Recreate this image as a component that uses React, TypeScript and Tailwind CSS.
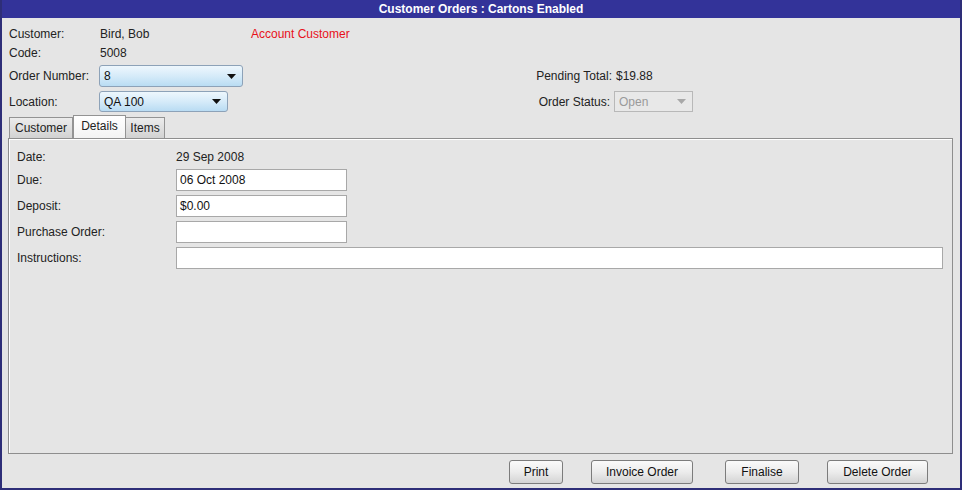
// Customer Orders window - Swing-style order screen with details tab selected
import React from "react";

const font = { fontFamily: '"Liberation Sans", Arial, sans-serif' };

// Small black down-arrow used inside the combo boxes
function Arrow({ color = "#111" }: { color?: string }) {
  return (
    <svg width="9" height="5" viewBox="0 0 9 5">
      <path d="M0 0 L9 0 L4.5 5 Z" fill={color} />
    </svg>
  );
}

// Light blue gradient combo box
function Combo({ value, width, height }: { value: string; width: string; height: string }) {
  return (
    <div
      className={`${width} ${height} flex items-center justify-between rounded-[3px] border border-[#8da2b8] bg-gradient-to-b from-[#eef7fd] via-[#d6ebf9] to-[#b9dcf3] pl-[4px] pr-[6px] text-[12px] text-[#111]`}
    >
      <span>{value}</span>
      <Arrow />
    </div>
  );
}

// White text field with grey border
function Field({ value = "", width }: { value?: string; width: string }) {
  return (
    <div
      className={`${width} h-[22px] flex items-center border border-[#a8a8a8] bg-white px-[3px] text-[12px] text-[#111]`}
    >
      {value}
    </div>
  );
}

function Button({ label, width }: { label: string; width: string }) {
  return (
    <div
      className={`${width} h-[24px] flex items-center justify-center rounded-[3px] border border-[#7c7c7c] bg-gradient-to-b from-[#fafafa] via-[#ececec] to-[#d4d4d4] text-[12px] text-[#111]`}
    >
      {label}
    </div>
  );
}

export default function App() {
  return (
    <div
      style={font}
      className="w-[962px] h-[490px] flex flex-col bg-[#e5e5e5] border-l-2 border-r-2 border-b-2 border-[#2e2e78] text-[12px] text-[#222]"
    >
      {/* Title bar */}
      <div className="h-[18px] shrink-0 bg-[#333399] flex items-center justify-center text-white font-bold text-[12px]">
        Customer Orders : Cartons Enabled
      </div>

      {/* Header fields */}
      <div className="pl-[7px] pt-[6px] flex flex-col">
        <div className="h-[19px] flex items-center">
          <span className="w-[91px]">Customer:</span>
          <span className="w-[151px]">Bird, Bob</span>
          <span className="text-[#e8101a]">Account Customer</span>
        </div>
        <div className="h-[19px] flex items-center">
          <span className="w-[91px]">Code:</span>
          <span>5008</span>
        </div>
        <div className="mt-[3px] h-[22px] flex items-center">
          <div className="w-[491px] flex items-center">
            <span className="w-[90px]">Order Number:</span>
            <Combo value="8" width="w-[144px]" height="h-[22px]" />
          </div>
          <span className="w-[112px] text-right">Pending Total:</span>
          <span className="ml-[4px]">$19.88</span>
        </div>
        <div className="mt-[4px] h-[21px] flex items-center">
          <div className="w-[491px] flex items-center">
            <span className="w-[90px]">Location:</span>
            <Combo value="QA 100" width="w-[129px]" height="h-[21px]" />
          </div>
          <span className="w-[110px] text-right">Order Status:</span>
          <div className="ml-[4px] w-[79px] h-[21px] flex items-center justify-between border border-[#b8b8b8] bg-[#e8e8e8] pl-[4px] pr-[6px] text-[#9a9a9a]">
            <span>Open</span>
            <Arrow color="#a8a8a8" />
          </div>
        </div>
      </div>

      {/* Tabs + panel */}
      <div className="mt-[3px] pl-[6px] pr-[7px] flex flex-col">
        <div className="h-[23px] flex items-end pl-[1px]">
          <div className="h-[21px] w-[64px] flex items-center justify-center border border-b-0 border-[#939393] bg-gradient-to-b from-[#ececec] to-[#d2d2d2]">
            Customer
          </div>
          <div className="h-[23px] w-[53px] flex items-center justify-center border border-b-0 border-[#939393] bg-gradient-to-b from-white to-[#f3f3f3] pb-[2px]">
            Details
          </div>
          <div className="h-[21px] w-[39px] flex items-center justify-center border border-b-0 border-l-0 border-[#939393] bg-gradient-to-b from-[#ececec] to-[#d2d2d2]">
            Items
          </div>
        </div>
        <div className="h-[316px] border border-[#8e8e8e] bg-[#e5e5e5] shadow-[inset_1px_1px_0_#ffffff] pl-[8px] pr-[9px] pt-[10px] flex flex-col gap-[4px]">
          <div className="h-[16px] flex items-center">
            <span className="w-[159px]">Date:</span>
            <span>29 Sep 2008</span>
          </div>
          <div className="flex items-center">
            <span className="w-[159px]">Due:</span>
            <Field value="06 Oct 2008" width="w-[171px]" />
          </div>
          <div className="flex items-center">
            <span className="w-[159px]">Deposit:</span>
            <Field value="$0.00" width="w-[171px]" />
          </div>
          <div className="flex items-center">
            <span className="w-[159px]">Purchase Order:</span>
            <Field width="w-[171px]" />
          </div>
          <div className="flex items-center">
            <span className="w-[159px] shrink-0">Instructions:</span>
            <Field width="flex-1" />
          </div>
        </div>
      </div>

      {/* Action buttons */}
      <div className="mt-[6px] flex items-center justify-end pr-[32px]">
        <Button label="Print" width="w-[54px]" />
        <div className="ml-[28px]">
          <Button label="Invoice Order" width="w-[102px]" />
        </div>
        <div className="ml-[32px]">
          <Button label="Finalise" width="w-[74px]" />
        </div>
        <div className="ml-[28px]">
          <Button label="Delete Order" width="w-[101px]" />
        </div>
      </div>
    </div>
  );
}
